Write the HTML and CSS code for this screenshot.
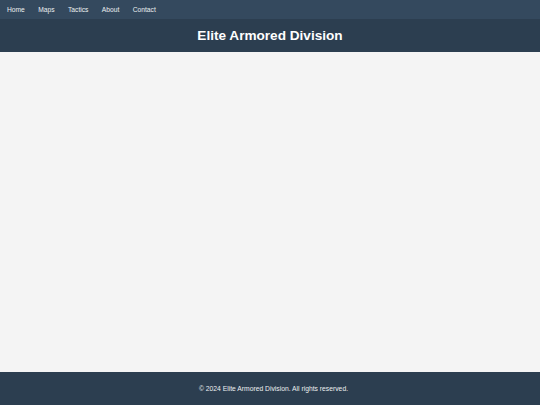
FILE: index.html
```html
<!DOCTYPE html>
<html>
<head>
<meta charset="utf-8">
<link rel="stylesheet" href="styles.css">
</head>
<body>
<div class="page">
  <nav class="nav">
    <a class="nav-link" href="#">Home</a>
    <a class="nav-link" href="#">Maps</a>
    <a class="nav-link" href="#">Tactics</a>
    <a class="nav-link" href="#">About</a>
    <a class="nav-link" href="#">Contact</a>
  </nav>
  <header class="header">
    <h1 class="title">Elite Armored Division</h1>
  </header>
  <main class="main"></main>
  <footer class="footer">
    <p class="footer-text">© 2024 Elite Armored Division. All rights reserved.</p>
  </footer>
</div>
</body>
</html>
```
FILE: styles.css
```css
html, body {
  margin: 0;
  padding: 0;
}
body {
  font-family: "Liberation Sans", Arial, sans-serif;
  background: #f4f4f4;
}
.page {
  display: flex;
  flex-direction: column;
  min-height: 100vh;
}
.nav {
  height: 19px;
  background: #34495e;
  display: flex;
  align-items: center;
  gap: 13.4px;
  padding: 0 7px;
}
.nav-link {
  color: #ecf0f1;
  text-decoration: none;
  font-size: 6.7px;
}
.header {
  height: 32.5px;
  background: #2c3e50;
  display: flex;
  align-items: center;
  justify-content: center;
}
.title {
  margin: 0;
  color: #ffffff;
  font-size: 13.6px;
  font-weight: bold;
}
.main {
  flex: 1;
  background: #f4f4f4;
}
.footer {
  height: 33px;
  background: #2c3e50;
  display: flex;
  align-items: center;
  justify-content: center;
  padding-left: 7px;
}
.footer-text {
  margin: 0;
  color: #ecf0f1;
  font-size: 6.75px;
}
```
